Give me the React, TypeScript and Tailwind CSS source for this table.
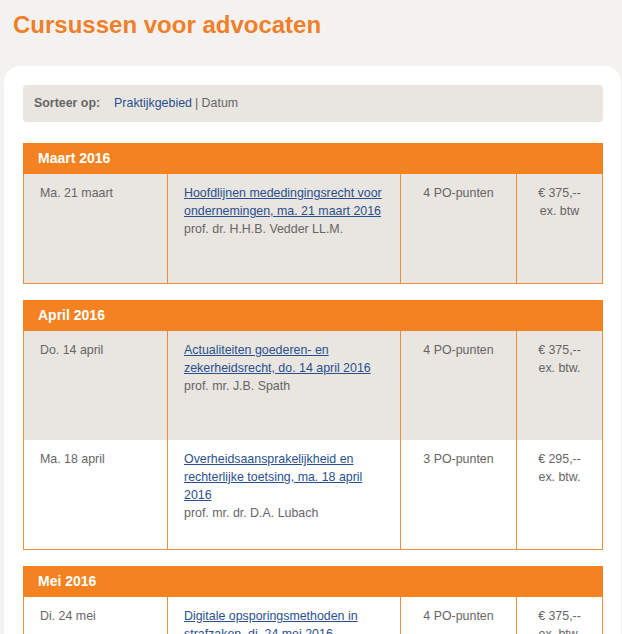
import React from "react";

type Course = {
  date: string;
  title: string[];
  teacher: string;
  points: string;
  price: string;
  btw: string;
  shaded: boolean;
};

type Month = { name: string; courses: Course[] };

const months: Month[] = [
  {
    name: "Maart 2016",
    courses: [
      {
        date: "Ma. 21 maart",
        title: ["Hoofdlijnen mededingingsrecht voor", "ondernemingen, ma. 21 maart 2016"],
        teacher: "prof. dr. H.H.B. Vedder LL.M.",
        points: "4 PO-punten",
        price: "€ 375,--",
        btw: "ex. btw",
        shaded: true,
      },
    ],
  },
  {
    name: "April 2016",
    courses: [
      {
        date: "Do. 14 april",
        title: ["Actualiteiten goederen- en", "zekerheidsrecht, do. 14 april 2016"],
        teacher: "prof. mr. J.B. Spath",
        points: "4 PO-punten",
        price: "€ 375,--",
        btw: "ex. btw.",
        shaded: true,
      },
      {
        date: "Ma. 18 april",
        title: ["Overheidsaansprakelijkheid en", "rechterlijke toetsing, ma. 18 april", "2016"],
        teacher: "prof. mr. dr. D.A. Lubach",
        points: "3 PO-punten",
        price: "€ 295,--",
        btw: "ex. btw.",
        shaded: false,
      },
    ],
  },
  {
    name: "Mei 2016",
    courses: [
      {
        date: "Di. 24 mei",
        title: ["Digitale opsporingsmethoden in", "strafzaken, di. 24 mei 2016"],
        teacher: "",
        points: "4 PO-punten",
        price: "€ 375,--",
        btw: "ex. btw.",
        shaded: false,
      },
    ],
  },
];

function Row({ c }: { c: Course }) {
  return (
    <div
      className={`grid grid-cols-[144px_233px_116px_85px] h-[109px] text-[12.4px] leading-[18px] text-[#666666] ${
        c.shaded ? "bg-[#e9e5e0]" : "bg-white"
      }`}
    >
      <div className="border-r border-[#ef8f3c] pl-[16px] pt-[10px]">{c.date}</div>
      <div className="border-r border-[#ef8f3c] pl-[16px] pr-[8px] pt-[10px]">
        <a href="#" className="text-[#2a4f8e] underline">
          {c.title.map((t, i) => (
            <React.Fragment key={i}>
              {t}
              {i < c.title.length - 1 && <br />}
            </React.Fragment>
          ))}
        </a>
        {c.teacher && <div>{c.teacher}</div>}
      </div>
      <div className="border-r border-[#ef8f3c] pt-[10px] text-center">{c.points}</div>
      <div className="pt-[10px] text-center">
        <div>{c.price}</div>
        <div>{c.btw}</div>
      </div>
    </div>
  );
}

export default function App() {
  return (
    <div
      className="min-h-[634px] bg-[#f3f2f0] overflow-hidden"
      style={{ fontFamily: '"Liberation Sans", Arial, sans-serif' }}
    >
      <h1 className="pl-[13px] pt-[11px] text-[24px] leading-[28px] font-bold text-[#f07f2a]">
        Cursussen voor advocaten
      </h1>
      <div className="ml-[4px] mt-[27px] w-[617px] rounded-t-[16px] bg-white px-[19px] pt-[19px] pb-[20px]">
        <div className="flex h-[37px] w-[580px] items-center rounded-[4px] bg-[#e9e6e1] pl-[11px] text-[12.4px] text-[#666666]">
          <span className="font-bold">Sorteer op:</span>
          <a href="#" className="ml-[14px] text-[#2a4f8e]">
            Praktijkgebied
          </a>
          <span className="ml-[3px]">| Datum</span>
        </div>
        <div className="mt-[21px] flex flex-col gap-[16px]">
          {months.map((m) => (
            <div key={m.name} className="w-[580px] border-x border-b border-[#ef8f3c]">
              <div className="-mx-px flex h-[31px] items-center bg-[#f48221] pl-[15px] text-[14px] font-bold text-white">
                {m.name}
              </div>
              {m.courses.map((c, i) => (
                <Row key={i} c={c} />
              ))}
            </div>
          ))}
        </div>
      </div>
    </div>
  );
}
